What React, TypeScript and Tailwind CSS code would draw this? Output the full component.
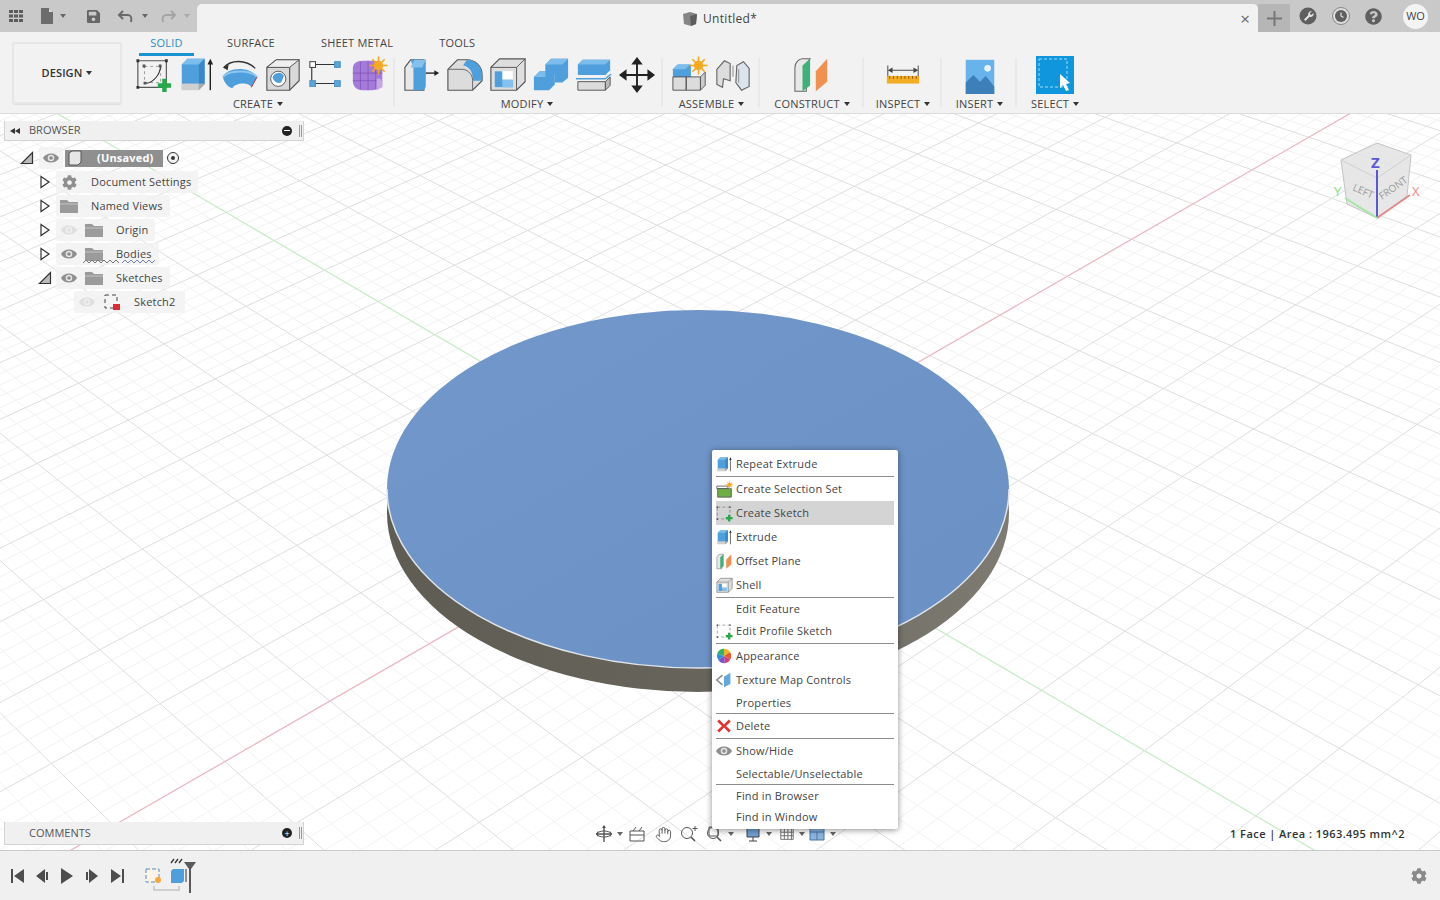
import { ReactNode } from 'react'
import { FaCog, FaQuestionCircle, FaSave } from 'react-icons/fa'
import { Hand } from 'lucide-react'

// ---- icons: drawn on a 40x40 box and scaled by `s`
function Ic({ s = 38, children }: { s?: number; children: ReactNode }) {
  return (
    <svg width={s} height={s} viewBox="0 0 40 40" className="shrink-0">
      {children}
    </svg>
  )
}

const Plus = ({ x, y, r = 7 }: { x: number; y: number; r?: number }) => (
  <path
    d={`M${x - r / 3} ${y - r}h${(r * 2) / 3}v${r - r / 3}h${r - r / 3}v${(r * 2) / 3}h-${r - r / 3}v${r - r / 3}h-${(r * 2) / 3}v-${r - r / 3}h-${r - r / 3}v-${(r * 2) / 3}h${r - r / 3}z`}
    fill="#27a84a"
  />
)

const Sun = ({ x, y, r = 5 }: { x: number; y: number; r?: number }) => (
  <g>
    <path
      d={`M${x} ${y - r * 1.9}V${y + r * 1.9}M${x - r * 1.9} ${y}H${x + r * 1.9}M${x - r * 1.3} ${y - r * 1.3}L${x + r * 1.3} ${y + r * 1.3}M${x - r * 1.3} ${y + r * 1.3}L${x + r * 1.3} ${y - r * 1.3}`}
      stroke="#f5a51d"
      strokeWidth="1.6"
    />
    <circle cx={x} cy={y} r={r} fill="#f7a91f" />
  </g>
)

const SketchIcon = ({ s, plain }: { s?: number; plain?: boolean }) => (
  <Ic s={s}>
    <path d="M3 5h30v28H3z" fill="none" stroke="#555" strokeWidth="1.2" strokeDasharray={plain ? '7 5' : '0'} />
    {!plain && (
      <>
        <path d="M10 11h17v17H10z" fill="none" stroke="#999" strokeDasharray="3 3" />
        <path d="M12 29C20 27 26 20 27 11" fill="none" stroke="#333" strokeWidth="1.2" />
        <path d="M8 9h3v3H8zM25 9h3v3h-3zM9 27h3v3H9z" fill="#555" />
      </>
    )}
    <path d="M1.5 3.5h3v3h-3zM31.500 3.500h3v3h-3zM1.500 31.500h3v3h-3z" fill="#333" />
    <Plus x={31} y={31} r={plain ? 8 : 7} />
  </Ic>
)

const ExtrudeIcon = ({ s }: { s?: number }) => (
  <Ic s={s}>
    <path d="M4 9l6-6h18v26l-6 6H4z" fill="#4f9fdc" />
    <path d="M4 9l6-6h18l-6 6z" fill="#7dbdeb" />
    <path d="M22 9l6-6v26l-6 6z" fill="#3987c6" />
    <path d="M4 29h18v7H4z" fill="#cfcfcf" />
    <path d="M22 29l6 0v1l-6 6z" fill="#aaa" />
    <path d="M34 36V7" stroke="#222" strokeWidth="1.5" />
    <path d="M31 9l3-6 3 6z" fill="#222" />
  </Ic>
)

const RevolveIcon = () => (
  <Ic>
    <path d="M3 12C10 4 26 3 36 13" fill="none" stroke="#333" strokeWidth="1.4" />
    <path d="M2 12l6-3-1 6z" fill="#333" />
    <path d="M2 22C6 12 30 10 38 22l-6 11c-2-5-16-6-20 1C8 33 3 28 2 22z" fill="#4f9fdc" />
    <path d="M2 22C8 15 30 14 38 22" fill="none" stroke="#8cc8f0" strokeWidth="2" />
    <path d="M38 22l-6 11" stroke="#b33" strokeWidth="1" />
  </Ic>
)

const HoleIcon = () => (
  <Ic>
    <path d="M3 12l10-8h24v22l-10 10H3z" fill="#d9d9d9" stroke="#555" strokeWidth="1.2" />
    <path d="M3 12h24v24" fill="none" stroke="#555" strokeWidth="1.2" />
    <path d="M3 12l10-8h24l-10 8z" fill="#eee" stroke="#555" strokeWidth="1" />
    <circle cx="15" cy="24" r="8" fill="#fff" stroke="#555" />
    <path d="M9 23a6.500 6.500 0 0 1 12-2l-3 7a7 7 0 0 1-9-5z" fill="#4f9fdc" />
  </Ic>
)

const PatternIcon = () => (
  <Ic>
    <path d="M9 9h20M9 29h20M5 12v14" stroke="#333" strokeWidth="1.2" />
    <rect x="3" y="6" width="6" height="6" fill="#fff" stroke="#333" />
    <rect x="29" y="6" width="6" height="6" fill="#5aa6dc" stroke="#4a8fc0" />
    <rect x="3" y="26" width="6" height="6" fill="#5aa6dc" stroke="#4a8fc0" />
    <rect x="29" y="26" width="6" height="6" fill="#5aa6dc" stroke="#4a8fc0" />
  </Ic>
)

const FormIcon = () => (
  <Ic>
    <path d="M3 13c0-5 4-8 10-8h11c6 0 10 4 10 10v11c0 6-4 10-11 10H13c-6 0-10-4-10-10z" fill="#a47bd8" />
    <path d="M3 18h31M3 26h31M11 6v29M19 5v31M27 6v29" stroke="#7a4db5" strokeWidth="0.7" />
    <path d="M28 24c6-2 7 4 6 9l-6 3z" fill="#c5a6e8" />
    <Sun x={30} y={10} r={5} />
  </Ic>
)

const PressPullIcon = () => (
  <Ic>
    <path d="M2 12l6-8h14v32H2z" fill="#e8e8e8" stroke="#555" strokeWidth="1.2" />
    <path d="M8 4h16v27c0 3-2 5-5 5H11V12z" fill="#4f9fdc" />
    <path d="M8 12l4-8h12l-4 8z" fill="#85c1ec" />
    <path d="M24 18h10" stroke="#222" strokeWidth="1.4" />
    <path d="M33 15l5 3-5 3z" fill="#222" />
  </Ic>
)

const FilletIcon = () => (
  <Ic>
    <path d="M2 14L12 4h10c9 0 16 7 16 16v6l-10 10H2z" fill="#dcdcdc" stroke="#555" strokeWidth="1.2" />
    <path d="M22 4c9 0 16 7 16 16v6l-10 0c1-8-3-15-10-16z" fill="#4f9fdc" />
    <path d="M2 14h16c6 1 10 6 10 12v10" fill="none" stroke="#666" />
  </Ic>
)

const ShellIcon = ({ s }: { s?: number }) => (
  <Ic s={s}>
    <path d="M2 12l9-9h27v24l-9 9H2z" fill="#dedede" stroke="#555" strokeWidth="1.2" />
    <path d="M2 12h27v24M29 12l9-9" fill="none" stroke="#555" strokeWidth="1" />
    <path d="M6 16h19v17H6z" fill="#fff" />
    <path d="M6 16h8v9h11v8H6z" fill="#4f9fdc" />
    <path d="M14 25h11v8H14z" fill="#85c1ec" />
  </Ic>
)

const CombineIcon = () => (
  <Ic>
    <path d="M14 9l6-6h18v20l-6 5H24v-9H14z" fill="#4f9fdc" />
    <path d="M14 9l6-6h18l-6 6z" fill="#7dbdeb" />
    <path d="M2 22l6-6h16v14l-6 6H2z" fill="#4f9fdc" />
    <path d="M2 22l6-6h6v6z" fill="#7dbdeb" />
  </Ic>
)

const SplitIcon = () => (
  <Ic>
    <path d="M3 9l5-5h29v11l-5 5H3z" fill="#4f9fdc" />
    <path d="M3 9l5-5h29l-5 5z" fill="#7dbdeb" />
    <path d="M1 24h31l6-5" fill="none" stroke="#4f9fdc" strokeWidth="1.5" />
    <path d="M3 27h29v9H3z" fill="#dcdcdc" stroke="#555" />
    <path d="M32 27l5-5v9l-5 5z" fill="#bbb" stroke="#555" />
  </Ic>
)

const MoveIcon = () => (
  <Ic>
    <path d="M20 5v30M5 20h30" stroke="#222" strokeWidth="2" />
    <path d="M20 1l6 8H14zM20 39l6-8H14zM1 20l8-6v12zM39 20l-8-6v12z" fill="#222" />
  </Ic>
)

const ComponentIcon = () => (
  <Ic>
    <path d="M2 14l5-5h14v14H2z" fill="#4f9fdc" />
    <path d="M2 14l5-5h13l-5 5z" fill="#7dbdeb" />
    <path d="M2 22h14v14H2zM16 22h15v14H16z" fill="#dcdcdc" stroke="#555" />
    <path d="M31 22l5-5v14l-5 5z" fill="#ccc" stroke="#555" />
    <Sun x={29} y={10} r={5} />
  </Ic>
)

const JointIcon = () => (
  <Ic>
    <path d="M3 14l8-9 6 3v18l-7-2-1 9-6-3z" fill="#ddd" stroke="#666" strokeWidth="1.2" />
    <path d="M37 13l-6-7-7 4-1 18 6 8 8-4z" fill="#dbe4ec" stroke="#666" strokeWidth="1.2" />
    <path d="M20 10v12M26 14v14" stroke="#888" />
  </Ic>
)

const PlaneIcon = ({ s }: { s?: number }) => (
  <Ic s={s}>
    <path d="M2 12c0-5 4-9 8-9h8L14 8v29H2z" fill="#e8e8e8" stroke="#666" strokeWidth="1.1" />
    <path d="M10 10l8-7v28l-8 6z" fill="#3fb07a" />
    <path d="M24 16l12-13v24l-12 10z" fill="#f0914f" />
  </Ic>
)

const MeasureIcon = () => (
  <Ic>
    <path d="M4 10v15M36 10v15" stroke="#444" />
    <path d="M6 15h28" stroke="#444" />
    <path d="M4 15l5-3v6zM36 15l-5-3v6z" fill="#444" />
    <rect x="3" y="21" width="34" height="8" fill="#f3ad22" />
    <path d="M6 21v3M10 21v3M14 21v3M18 21v3M22 21v3M26 21v3M30 21v3M34 21v3" stroke="#8a5a10" />
  </Ic>
)

const InsertIcon = () => (
  <Ic>
    <rect x="5" y="4" width="30" height="36" fill="#68b3ec" />
    <circle cx="28" cy="13" r="3.500" fill="#e8f4fc" />
    <path d="M5 36V28l8-8 7 7 6-6 9 11v8H5z" fill="#3d7fb8" />
  </Ic>
)

const SelectIcon = () => (
  <div className="flex h-[38px] w-[38px] shrink-0 items-center justify-center bg-[#0f96dc]">
    <svg width="38" height="38" viewBox="0 0 38 38">
      <path d="M3 3h28v28H3z" fill="none" stroke="#9ddcf8" strokeDasharray="3 2" />
      <path d="M24 18l0 14 3-3 3 6 3-1-3-6 4-1z" fill="#fff" />
    </svg>
  </div>
)

const Eye = ({ faded, s = 16 }: { faded?: boolean; s?: number }) => (
  <svg width={s} height={s} viewBox="0 0 16 16" className={faded ? 'shrink-0 opacity-20' : 'shrink-0'}>
    <path d="M0 8c3-6 13-6 16 0-3 6-13 6-16 0z" fill="#8e8e8e" />
    <circle cx="8" cy="8" r="3.300" fill="#e4e4e4" />
    <circle cx="8" cy="8" r="1.800" fill="#8e8e8e" />
  </svg>
)

const Folder = () => (
  <svg width="18" height="16" viewBox="0 0 18 16" className="shrink-0">
    <path d="M0 2h7l2 2h9v11H0z" fill="#9b9b9b" />
    <path d="M0 6h18" stroke="#c4c4c4" />
  </svg>
)

const Triangle = ({ open }: { open?: boolean }) => (
  <svg width="14" height="14" viewBox="0 0 14 14" className="shrink-0">
    {open ? (
      <path d="M1.500 12.500L12.500 1.500V12.500z" fill="#bbb" stroke="#333" strokeWidth="1.200" />
    ) : (
      <path d="M3 1.500L11 7 3 12.500z" fill="#fff" stroke="#333" strokeWidth="1.200" />
    )}
  </svg>
)

const Caret = () => (
  <span className="ml-[4px] inline-block h-0 w-0 border-x-[3px] border-t-[4px] border-x-transparent border-t-[#333]" />
)

// ---- viewport drawing: a perspective grid with the extruded disc on top
const A = 0.0247
const B = 0.033
function pt(u: number, v: number) {
  const w = 1 + u * A + v * B
  return [(698 + u * A * 4056 - v * B * 1561) / w, (489 - u * A * 1445 - v * B * 835) / w]
}
function uLine(u: number) {
  const p = pt(u, Math.max((0.14 - 1 - u * A) / B, -60))
  const q = pt(u, 60)
  return `M${p[0].toFixed(1)} ${p[1].toFixed(1)}L${q[0].toFixed(1)} ${q[1].toFixed(1)}`
}
function vLine(v: number) {
  const p = pt(Math.max((0.14 - 1 - v * B) / A, -60), v)
  const q = pt(60, v)
  return `M${p[0].toFixed(1)} ${p[1].toFixed(1)}L${q[0].toFixed(1)} ${q[1].toFixed(1)}`
}

function Viewport() {
  const minor: string[] = []
  const major: string[] = []
  for (let i = -125; i <= 200; i++) {
    const n = i / 5
    const list = i % 5 === 0 ? major : minor
    list.push(uLine(n), vLine(n))
  }
  return (
    <svg className="absolute inset-0 h-full w-full" viewBox="0 114 1440 736">
      <defs>
        <linearGradient id="top" x1="0" y1="0" x2="1" y2="1">
          <stop offset="0" stopColor="#7297ca" />
          <stop offset="1" stopColor="#6b90c4" />
        </linearGradient>
        <linearGradient id="side" x1="0" y1="0" x2="1" y2="0">
          <stop offset="0" stopColor="#5f5c54" />
          <stop offset="0.5" stopColor="#67645c" />
          <stop offset="1" stopColor="#7e7b73" />
        </linearGradient>
      </defs>
      <path d={minor.join('')} stroke="#f2f2f2" strokeWidth="1" fill="none" />
      <path d={major.join('')} stroke="#dedede" strokeWidth="1" fill="none" />
      <path d={vLine(0)} stroke="#ecb9c4" strokeWidth="1.200" fill="none" />
      <path d={uLine(0)} stroke="#c9efc9" strokeWidth="1.200" fill="none" />
      <ellipse cx="698" cy="513" rx="311" ry="179" fill="url(#side)" />
      <ellipse cx="698" cy="489" rx="311" ry="179" fill="url(#top)" />
      <path d="M387 489A311 179 0 0 0 1009 489" fill="none" stroke="#dfe4ea" strokeWidth="1.500" />
    </svg>
  )
}

function ViewCube() {
  return (
    <svg width="100" height="100" viewBox="0 0 100 100" className="absolute right-[10px] top-[16px]">
      <path d="M47 13L11 30l6 44 30 14 30-22 4-41z" fill="#e3e3e3" fillOpacity="0.85" stroke="#c4c4c4" />
      <path d="M11 30l36 18 34-23M47 48v40" fill="none" stroke="#d0d0d0" />
      <text x="22" y="60" fontSize="10" fill="#9a9a9a" transform="rotate(24 22 60)" className="font-['Open_Sans',sans-serif]">
        LEFT
      </text>
      <text x="52" y="70" fontSize="10" fill="#9a9a9a" transform="rotate(-35 52 70)" className="font-['Open_Sans',sans-serif]">
        FRONT
      </text>
      <path d="M47 40v48" stroke="#5a58d6" strokeWidth="2" />
      <path d="M47 88l33-23" stroke="#e58a8a" strokeWidth="2" />
      <path d="M47 88L15 68" stroke="#a5e6a5" strokeWidth="2" />
      <text x="41" y="38" fontSize="15" fontWeight="700" fill="#5a58d6" className="font-['Open_Sans',sans-serif]">
        Z
      </text>
      <text x="82" y="66" fontSize="13" fill="#e88" className="font-['Open_Sans',sans-serif]">
        X
      </text>
      <text x="4" y="66" fontSize="13" fill="#8d8" className="font-['Open_Sans',sans-serif]">
        Y
      </text>
    </svg>
  )
}

function SmallCaret({ light, ml = 'ml-[4px]' }: { light?: boolean; ml?: string }) {
  return (
    <span
      className={`${ml} inline-block h-0 w-0 border-x-[3px] border-t-[4px] border-x-transparent ${light ? 'border-t-[#aaa]' : 'border-t-[#666]'}`}
    />
  )
}

// ---- title bar
function TitleBar() {
  return (
    <div className="flex h-8 shrink-0 items-end bg-[#c9c9c9]">
      <div className="flex h-8 w-[197px] shrink-0 items-center text-[#666]">
        <svg width="16" height="16" viewBox="0 0 16 16" className="ml-2 shrink-0" fill="#5c5c5c">
          <path d="M1 2h4v3H1zM6 2h4v3H6zM11 2h4v3h-4zM1 6.500h4v3H1zM6 6.500h4v3H6zM11 6.500h4v3h-4zM1 11h4v3H1zM6 11h4v3H6zM11 11h4v3h-4z" />
        </svg>
        <svg width="16" height="18" viewBox="0 0 16 18" className="ml-[15px] shrink-0">
          <path d="M2 1h8l4 4v12H2z" fill="#6d6d6d" />
          <path d="M10 1v4h4" fill="#ddd" />
        </svg>
        <SmallCaret ml="ml-[5px]" />
        <FaSave size={15} className="ml-[20px] shrink-0 text-[#666]" />
        <svg width="18" height="16" viewBox="0 0 18 16" className="ml-[16px] shrink-0">
          <path d="M6 3L2 7l4 4" fill="none" stroke="#6a6a6a" strokeWidth="2" />
          <path d="M3 7h8c3 0 4 3 3 7" fill="none" stroke="#6a6a6a" strokeWidth="2" />
        </svg>
        <SmallCaret ml="ml-[7px]" />
        <svg width="18" height="16" viewBox="0 0 18 16" className="ml-[11px] shrink-0">
          <path d="M12 3l4 4-4 4" fill="none" stroke="#a4a4a4" strokeWidth="2" />
          <path d="M15 7H7c-3 0-4 3-3 7" fill="none" stroke="#a4a4a4" strokeWidth="2" />
        </svg>
        <SmallCaret light ml="ml-[7px]" />
      </div>
      <div className="flex h-7 flex-1 items-center rounded-t-[5px] bg-[#f2f2f2] pr-[8px]">
        <div className="flex flex-1 items-center justify-center gap-[5px] pl-[2px] pt-[1px] text-[12px] tracking-[0.3px] text-[#444]">
          <svg width="16" height="16" viewBox="0 0 16 16">
            <path d="M1 3l7-2 7 2-1 10-5 2-7-2z" fill="#858585" />
            <path d="M8 5l7-2-1 10-5 2z" fill="#5d5d5d" />
          </svg>
          Untitled*
        </div>
        <span className="text-[17px] leading-none text-[#666]">×</span>
      </div>
      <div className="flex h-7 w-[32px] items-center justify-center bg-[#b6b6b6] text-[#777]">
        <svg width="15" height="15" viewBox="0 0 15 15">
          <path d="M7.500 0v15M0 7.500h15" stroke="#777" strokeWidth="2" />
        </svg>
      </div>
      <div className="flex h-8 w-[150px] items-center pl-[9px] text-[#555]">
        <svg width="18" height="18" viewBox="0 0 18 18" className="shrink-0">
          <circle cx="9" cy="9" r="8.500" fill="#5f5f5f" />
          <path d="M13 4.500a3 3 0 0 0-3.800 3.800L5 12.600 6.400 14l4.300-4.200a3 3 0 0 0 3.800-3.800l-1.800 1.800-1.500-.4-.4-1.500z" fill="#e4e4e4" />
        </svg>
        <svg width="18" height="18" viewBox="0 0 18 18" className="ml-[15px] shrink-0">
          <circle cx="9" cy="9" r="8.500" fill="#ddd" stroke="#888" />
          <circle cx="9" cy="9" r="6" fill="#5f5f5f" />
          <path d="M9 5.500V9l2.500 1.500" fill="none" stroke="#e4e4e4" strokeWidth="1.200" />
        </svg>
        <FaQuestionCircle size={17} className="ml-[15px] shrink-0 text-[#5f5f5f]" />
        <div className="ml-[21px] flex h-[25px] w-[25px] items-center justify-center rounded-full bg-[#f4f4f4] text-[11px] text-[#444]">
          WO
        </div>
      </div>
    </div>
  )
}

// ---- ribbon
function Group({
  label,
  w,
  icons,
  last,
  nudge = '',
}: {
  label: string
  w: string
  icons: ReactNode[]
  last?: boolean
  nudge?: string
}) {
  return (
    <div className={`${w} relative flex shrink-0 flex-col items-center`}>
      <div className="flex h-[38px] items-center gap-[5px]">
        {icons.map((ic, i) => (
          <div key={i}>{ic}</div>
        ))}
      </div>
      <div className={`${nudge} mt-[3px] flex items-center text-[11px] leading-[14px] tracking-[0.2px] text-[#444]`}>
        {label}
        <Caret />
      </div>
      {!last && <div className="absolute bottom-[4px] right-0 top-[2px] w-[2px] bg-[#e9e9e9]" />}
    </div>
  )
}

function Ribbon() {
  return (
    <div className="flex h-[82px] shrink-0 border-b border-[#dcdcdc] bg-[#f2f2f2] pl-3">
      <div className="mt-[10px] flex h-[62px] w-[110px] shrink-0 items-center justify-center rounded-[3px] border-2 border-[#e6e6e6] text-[11px] font-semibold tracking-[0.1px] text-[#333] shadow-[0_1px_1px_rgba(0,0,0,0.08)]">
        DESIGN
        <Caret />
      </div>
      <div className="ml-[6px] flex flex-col">
        <div className="flex h-[24px] items-start text-[11px] leading-[14px] tracking-[0.2px] text-[#444]">
          <div className="ml-[11px] h-[24px] w-[55px] border-b-[3px] border-[#1793d1] pt-[4px] text-center text-[#2b8cc4]">SOLID</div>
          <div className="ml-[33px] mt-[4px]">SURFACE</div>
          <div className="ml-[46px] mt-[4px]">SHEET METAL</div>
          <div className="ml-[46px] mt-[4px]">TOOLS</div>
        </div>
        <div className="flex">
          <Group
            label="CREATE"
            w="w-[267px]"
            nudge="mr-[7px]"
            icons={[
              <SketchIcon key="a" />,
              <ExtrudeIcon key="b" />,
              <RevolveIcon key="c" />,
              <HoleIcon key="d" />,
              <PatternIcon key="e" />,
              <FormIcon key="f" />,
            ]}
          />
          <Group
            label="MODIFY"
            w="w-[268px]"
            nudge="mr-[4px]"
            icons={[
              <PressPullIcon key="a" />,
              <FilletIcon key="b" />,
              <ShellIcon key="c" />,
              <CombineIcon key="d" />,
              <SplitIcon key="e" />,
              <MoveIcon key="f" />,
            ]}
          />
          <Group label="ASSEMBLE" w="w-[97px]" icons={[<ComponentIcon key="a" />, <JointIcon key="b" />]} />
          <Group label="CONSTRUCT" w="w-[104px]" icons={[<PlaneIcon key="a" />]} />
          <Group label="INSPECT" w="w-[78px]" icons={[<MeasureIcon key="a" />]} />
          <Group label="INSERT" w="w-[75px]" icons={[<InsertIcon key="a" />]} />
          <Group label="SELECT" w="w-[76px]" icons={[<SelectIcon key="a" />]} last />
        </div>
      </div>
    </div>
  )
}

// ---- browser tree
function TreeRow({ indent, open, children }: { indent: string; open?: boolean; children: ReactNode }) {
  return (
    <div className={`${indent} flex h-6 items-center`}>
      {open !== undefined && <Triangle open={open} />}
      {children}
    </div>
  )
}

function Chip({ children, pad = 'ml-[4px] pl-[2px] pr-[7px]' }: { children: ReactNode; pad?: string }) {
  return <div className={`${pad} flex h-[22px] items-center rounded-[2px] bg-[#f1f1f1]/80`}>{children}</div>
}

const Slot = ({ children }: { children: ReactNode }) => <span className="flex w-[22px] justify-center">{children}</span>

function Browser() {
  return (
    <div className="absolute left-[4px] top-[7px] w-[300px]">
      <div className="flex h-[20px] items-center border-x border-b border-[#d4d4d4] bg-[#f0f0f0] text-[11px] text-[#555]">
        <span className="ml-[5px] flex w-[20px] items-center">
          <span className="h-0 w-0 border-y-[3px] border-r-[5px] border-y-transparent border-r-[#333]" />
          <span className="h-0 w-0 border-y-[3px] border-r-[5px] border-y-transparent border-r-[#333]" />
        </span>
        <span className="-ml-px">BROWSER</span>
        <span className="ml-auto mr-[7px] flex h-[10px] w-[10px] items-center justify-center rounded-full bg-[#222]">
          <span className="h-px w-[6px] bg-white" />
        </span>
        <span className="mr-px h-[12px] w-[3px] border-x border-[#999]" />
      </div>
      <div className="mt-[5px] text-[11px] tracking-[0.18px] text-[#444]">
        <TreeRow indent="pl-[16px]" open>
          <Chip pad="ml-[5px] px-[4px]">
            <Eye />
          </Chip>
          <div className="ml-[2px] flex h-[17px] w-[98px] items-center bg-[#8f8f8f] pl-[2px] font-bold text-white">
            <svg width="16" height="16" viewBox="0 0 16 16" className="shrink-0">
              <path d="M2 3l3-2h9v11l-3 3H2z" fill="#e6e6e6" stroke="#555" />
            </svg>
            <span className="ml-[14px]">(Unsaved)</span>
          </div>
          <svg width="16" height="16" viewBox="0 0 16 16" className="ml-[2px] shrink-0">
            <circle cx="8" cy="8" r="5.500" fill="#f4f4f4" stroke="#333" />
            <circle cx="8" cy="8" r="2" fill="#333" />
          </svg>
        </TreeRow>
        <TreeRow indent="pl-[34px]" open={false}>
          <Chip>
            <Slot>
              <FaCog size={15} className="text-[#8f8f8f]" />
            </Slot>
            <span className="ml-[11px]">Document Settings</span>
          </Chip>
        </TreeRow>
        <TreeRow indent="pl-[34px]" open={false}>
          <Chip>
            <Slot>
              <Folder />
            </Slot>
            <span className="ml-[11px]">Named Views</span>
          </Chip>
        </TreeRow>
        <TreeRow indent="pl-[34px]" open={false}>
          <Chip>
            <Slot>
              <Eye faded />
            </Slot>
            <span className="ml-[5px]">
              <Folder />
            </span>
            <span className="ml-[13px]">Origin</span>
          </Chip>
        </TreeRow>
        <TreeRow indent="pl-[34px]" open={false}>
          <Chip>
            <Slot>
              <Eye />
            </Slot>
            <span className="relative ml-[5px]">
              <Folder />
              <svg width="78" height="6" viewBox="0 0 78 6" className="absolute left-[-2px] top-[13px]">
                <path d="M0 4l3-3 3 3 3-3 3 3 3-3 3 3 3-3 3 3 3-3 3 3 3-3 3 3" fill="none" stroke="#777" strokeWidth="1" />
                <path d="M39 4l3-3 3 3 3-3 3 3 3-3 3 3 3-3 3 3 3-3 3 3 3-3" fill="none" stroke="#7280b0" strokeWidth="1" />
              </svg>
            </span>
            <span className="ml-[13px]">Bodies</span>
          </Chip>
        </TreeRow>
        <TreeRow indent="pl-[34px]" open>
          <Chip>
            <Slot>
              <Eye />
            </Slot>
            <span className="ml-[5px]">
              <Folder />
            </span>
            <span className="ml-[13px]">Sketches</span>
          </Chip>
        </TreeRow>
        <TreeRow indent="pl-[66px]">
          <Chip pad="ml-[4px] pl-[2px] pr-[10px]">
            <Slot>
              <Eye faded />
            </Slot>
            <svg width="18" height="18" viewBox="0 0 18 18" className="ml-[5px] shrink-0">
              <path d="M2 2h12v13H2z" fill="none" stroke="#444" strokeDasharray="4 3" />
              <rect x="10" y="11" width="7" height="6" fill="#d92b32" />
            </svg>
            <span className="ml-[13px]">Sketch2</span>
          </Chip>
        </TreeRow>
      </div>
    </div>
  )
}

// ---- context menu
function MenuItem({ h, icon, active, children }: { h: string; icon?: ReactNode; active?: boolean; children: string }) {
  return (
    <div className={`${h} ${active ? 'bg-[#d4d4d4]' : ''} mx-1 flex items-center text-[11px] tracking-[0.2px] text-[#444]`}>
      <span className="flex w-[20px] shrink-0 items-center">{icon}</span>
      {children}
    </div>
  )
}

const Rule = () => <div className="mx-1 h-px bg-[#8c8c8c]" />

function ContextMenu() {
  return (
    <div className="absolute left-[712px] top-[336px] z-10 w-[186px] rounded-[2px] bg-white pb-[2px] pt-[2px] shadow-[0_1px_6px_rgba(0,0,0,0.45)]">
      <MenuItem h="h-[24px]" icon={<ExtrudeIcon s={17} />}>
        Repeat Extrude
      </MenuItem>
      <Rule />
      <MenuItem
        h="h-[24px]"
        icon={
          <Ic s={17}>
            <path d="M2 12h26v6H2z" fill="#fff" stroke="#555" strokeWidth="2" />
            <path d="M4 18h32v20H4z" fill="#6fae45" stroke="#555" strokeWidth="2" />
            <Sun x={32} y={9} r={5} />
          </Ic>
        }
      >
        Create Selection Set
      </MenuItem>
      <MenuItem h="h-[24px]" active icon={<SketchIcon s={17} plain />}>
        Create Sketch
      </MenuItem>
      <MenuItem h="h-[24px]" icon={<ExtrudeIcon s={17} />}>
        Extrude
      </MenuItem>
      <MenuItem h="h-[24px]" icon={<PlaneIcon s={17} />}>
        Offset Plane
      </MenuItem>
      <MenuItem h="h-[24px]" icon={<ShellIcon s={17} />}>
        Shell
      </MenuItem>
      <Rule />
      <MenuItem h="h-[22px]">Edit Feature</MenuItem>
      <MenuItem h="h-[23px]" icon={<SketchIcon s={17} plain />}>
        Edit Profile Sketch
      </MenuItem>
      <Rule />
      <MenuItem
        h="h-[24px]"
        icon={
          <Ic s={16}>
            <path d="M20 20V2a18 18 0 0 1 15 8z" fill="#f0b429" />
            <path d="M20 20l15-10a18 18 0 0 1 1 18z" fill="#e8582d" />
            <path d="M20 20l16 8a18 18 0 0 1-14 10z" fill="#d83d78" />
            <path d="M20 20l2 18a18 18 0 0 1-16-8z" fill="#7a55c7" />
            <path d="M20 20L6 30a18 18 0 0 1-3-16z" fill="#2f8fd8" />
            <path d="M20 20L3 14A18 18 0 0 1 20 2z" fill="#2fb26f" />
          </Ic>
        }
      >
        Appearance
      </MenuItem>
      <MenuItem
        h="h-[24px]"
        icon={
          <Ic s={16}>
            <path d="M16 8L2 20l14 12" fill="none" stroke="#8a8a8a" strokeWidth="4" />
            <path d="M20 12L36 2v28L20 38z" fill="#62a9dc" />
          </Ic>
        }
      >
        Texture Map Controls
      </MenuItem>
      <MenuItem h="h-[21px] pt-[1px]">Properties</MenuItem>
      <Rule />
      <MenuItem
        h="h-[24px]"
        icon={
          <Ic s={16}>
            <path d="M8 4l12 12L32 4l5 5-12 11 12 11-5 5-12-12L8 36l-5-5 12-11L3 9z" fill="#e5322f" />
          </Ic>
        }
      >
        Delete
      </MenuItem>
      <Rule />
      <MenuItem h="h-[24px]" icon={<Eye />}>
        Show/Hide
      </MenuItem>
      <MenuItem h="h-[21px] pt-[1px]">Selectable/Unselectable</MenuItem>
      <Rule />
      <MenuItem h="h-[22px]">Find in Browser</MenuItem>
      <MenuItem h="h-[20px]">Find in Window</MenuItem>
    </div>
  )
}

// ---- navigation bar under the model
function NavBar() {
  const stroke = '#555'
  return (
    <div className="absolute left-[595px] top-[711px] flex h-[18px] items-center text-[#555]">
      <svg width="18" height="18" viewBox="0 0 18 18">
        <path d="M9 1v16M1 9h16" stroke={stroke} strokeWidth="1.400" />
        <ellipse cx="9" cy="9" rx="7" ry="3" fill="none" stroke={stroke} />
        <path d="M3 6l-2 3 2 3zM15 6l2 3-2 3zM7 3l2-3 2 3z" fill={stroke} />
      </svg>
      <SmallCaret />
      <svg width="18" height="18" viewBox="0 0 18 18" className="ml-[5px]">
        <path d="M2 6h14v10H2zM2 10h14M5 6l3-4M11 6l3-4" fill="none" stroke={stroke} />
      </svg>
      <Hand size={17} strokeWidth={1.300} className="ml-[9px]" />
      <svg width="18" height="18" viewBox="0 0 18 18" className="ml-[8px]">
        <circle cx="7" cy="8" r="5.500" fill="none" stroke={stroke} />
        <path d="M11 12l4 4" stroke={stroke} strokeWidth="1.600" />
        <path d="M15 1v5M12.500 3.500h5" stroke={stroke} />
      </svg>
      <svg width="18" height="18" viewBox="0 0 18 18" className="ml-[8px]">
        <path d="M3 2h9v9H3z" fill="none" stroke={stroke} />
        <circle cx="7" cy="8" r="5.500" fill="none" stroke={stroke} />
        <path d="M11 12l4 4" stroke={stroke} strokeWidth="1.600" />
      </svg>
      <SmallCaret />
    </div>
  )
}

function NavBarRight() {
  return (
    <div className="absolute left-[744px] top-[711px] flex h-[18px] items-center">
      <svg width="18" height="18" viewBox="0 0 18 18">
        <path d="M3 2h12v10H3z" fill="#6f9fd0" stroke="#444" />
        <path d="M9 12v4M5 16h8" stroke="#444" />
      </svg>
      <SmallCaret />
      <svg width="16" height="16" viewBox="0 0 18 18" className="ml-[7px]">
        <path d="M2 3h14v12H2zM2 7h14M2 11h14M6 3v12M10 3v12M14 3v12" fill="none" stroke="#666" />
      </svg>
      <SmallCaret />
      <svg width="18" height="18" viewBox="0 0 18 18" className="ml-[3px]">
        <path d="M2 3h14v12H2z" fill="#8ab4de" stroke="#4a76a8" />
        <path d="M2 7h14M9 7v8" stroke="#4a76a8" />
      </svg>
      <SmallCaret />
    </div>
  )
}

// ---- timeline
function Timeline() {
  return (
    <div className="flex h-[50px] shrink-0 items-center border-t border-[#c9c9c9] bg-[#f0f0f0] pl-[9px] pr-[13px]">
      <svg width="120" height="18" viewBox="0 0 120 18" fill="#4d4d4d" className="shrink-0">
        <path d="M2 2h2v14H2zM15 2v14L5 9z" />
        <path d="M36 2v14l-9-7zM37 5h2v8h-2z" />
        <path d="M52 1v16l12-8z" />
        <path d="M77 5h2v8h-2zM80 2v14l9-7z" />
        <path d="M102 2v14l10-7zM113 2h2v14h-2z" />
      </svg>
      <div className="relative ml-[15px] flex h-[32px] w-[50px] items-center gap-[6px]">
        <svg width="18" height="18" viewBox="0 0 18 18" className="shrink-0">
          <path d="M2 2h13v13H2z" fill="#fbf4e6" stroke="#5a8dbd" strokeDasharray="4 2" />
          <circle cx="14" cy="13" r="3" fill="#f4a83c" />
        </svg>
        <svg width="18" height="18" viewBox="0 0 18 18" className="ml-[1px] shrink-0">
          <path d="M2 4l2-2h11v12l-2 2H2z" fill="#4f9fdc" />
          <path d="M17 2v13" stroke="#333" />
        </svg>
        <svg width="18" height="12" viewBox="0 0 18 12" className="absolute left-[25px] top-[-3px]">
          <path d="M2 6l3-4M6 6l3-4M10 6l3-4" stroke="#333" strokeWidth="1.300" />
        </svg>
        <svg width="14" height="34" viewBox="0 0 14 34" className="absolute left-[39px] top-[1px]">
          <path d="M1 1h12L8 8v24H6V8z" fill="#5a5a5a" />
        </svg>
        <svg width="28" height="6" viewBox="0 0 28 6" className="absolute left-[9px] top-[26px]">
          <path d="M1 0v4h25V0" fill="none" stroke="#c4c4c4" strokeWidth="1.500" />
        </svg>
      </div>
      <FaCog size={16} className="ml-auto text-[#8a8a8a]" />
    </div>
  )
}

export default function App() {
  return (
    <div className="flex h-[900px] w-[1440px] flex-col overflow-hidden bg-white font-['Open_Sans','Noto_Sans',sans-serif]">
      <TitleBar />
      <Ribbon />
      <div className="relative flex-1">
        <Viewport />
        <ViewCube />
        <Browser />
        <NavBar />
        <NavBarRight />
        <ContextMenu />
        <div className="absolute bottom-[5px] left-[4px] flex h-[23px] w-[300px] items-center border-x border-b border-[#d4d4d4] bg-[#f0f0f0] text-[11px] text-[#555]">
          <span className="ml-[24px]">COMMENTS</span>
          <span className="ml-auto mr-[7px] flex h-[10px] w-[10px] items-center justify-center rounded-full bg-[#222] text-[9px] leading-none text-white">+</span>
          <span className="mr-px h-[12px] w-[3px] border-x border-[#999]" />
        </div>
        <div className="absolute bottom-[8px] right-[35px] text-[11px] font-semibold tracking-[0.45px] text-[#333]">1 Face | Area : 1963.495 mm^2</div>
      </div>
      <Timeline />
    </div>
  )
}
